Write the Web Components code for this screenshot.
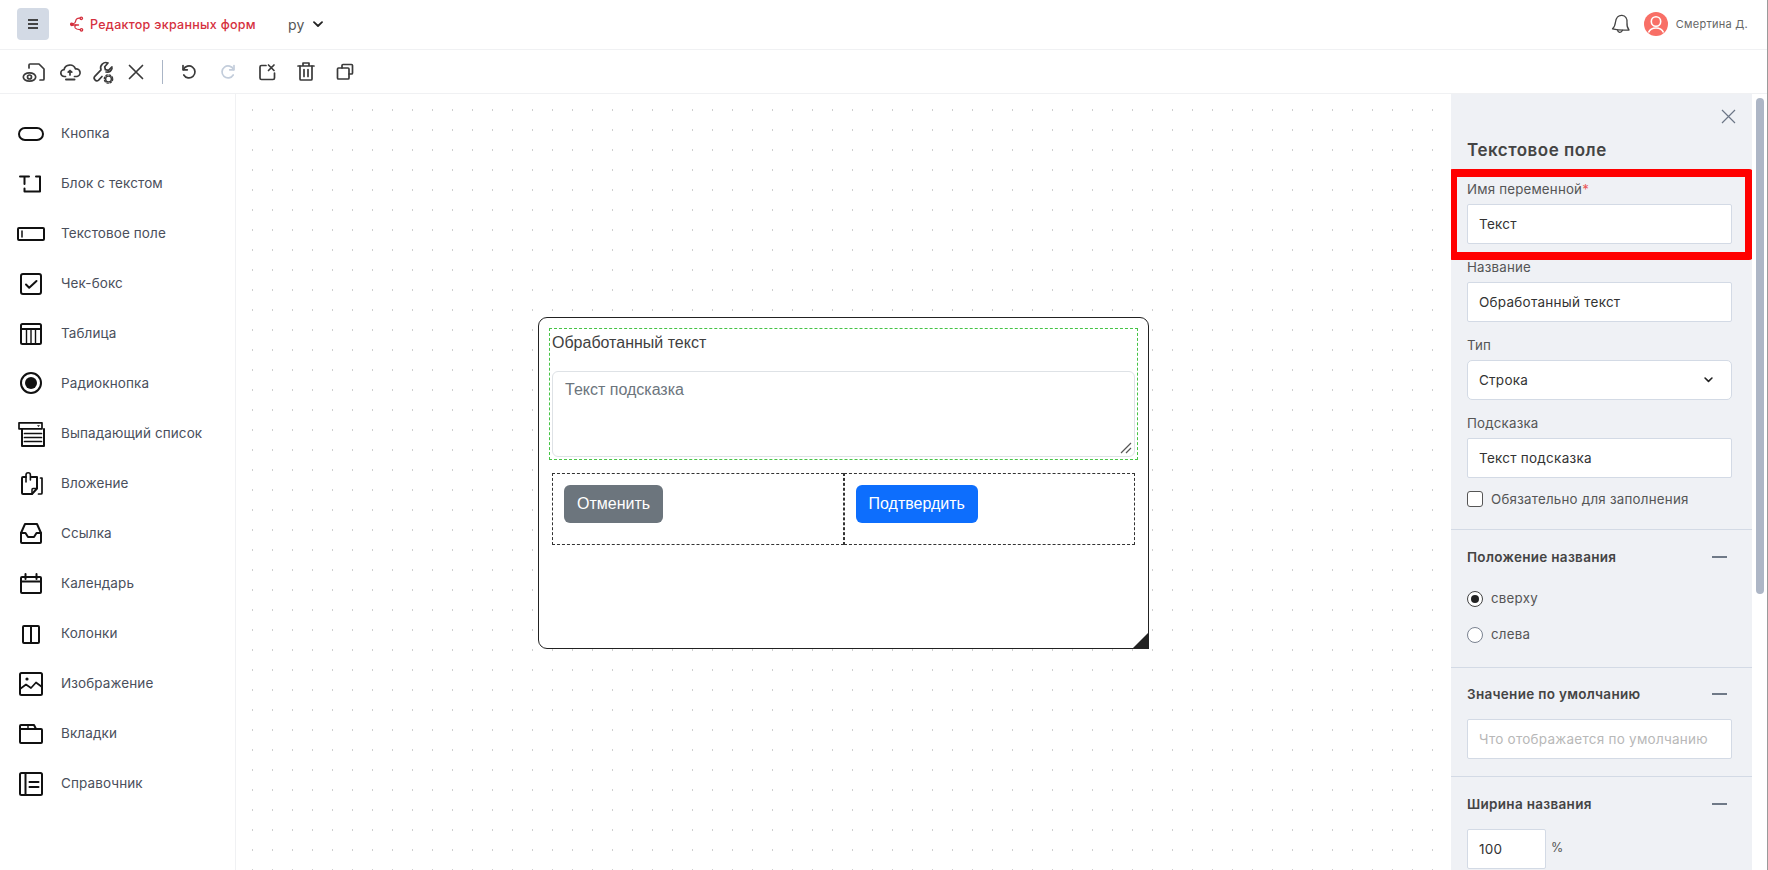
<!DOCTYPE html>
<html lang="ru">
<head>
<meta charset="utf-8">
<title>Редактор экранных форм</title>
<style>
html,body{margin:0;padding:0;height:100%;overflow:hidden;background:#fff}
body{font-family:Inter,"Noto Sans",sans-serif;color:#444}
</style>
</head>
<body>
<app-shell>
  <top-bar slot="top"></top-bar>
  <tool-bar slot="tools"></tool-bar>
  <side-palette slot="left">
    <palette-item icon="button">Кнопка</palette-item>
    <palette-item icon="textblock">Блок с текстом</palette-item>
    <palette-item icon="textfield">Текстовое поле</palette-item>
    <palette-item icon="checkbox">Чек-бокс</palette-item>
    <palette-item icon="table">Таблица</palette-item>
    <palette-item icon="radio">Радиокнопка</palette-item>
    <palette-item icon="dropdown">Выпадающий список</palette-item>
    <palette-item icon="attach">Вложение</palette-item>
    <palette-item icon="inbox">Ссылка</palette-item>
    <palette-item icon="calendar">Календарь</palette-item>
    <palette-item icon="columns">Колонки</palette-item>
    <palette-item icon="image">Изображение</palette-item>
    <palette-item icon="tabs">Вкладки</palette-item>
    <palette-item icon="book">Справочник</palette-item>
  </side-palette>
  <design-canvas slot="center"><form-preview></form-preview></design-canvas>
  <prop-panel slot="right">
    <prop-field label="Имя переменной" required value="Текст"></prop-field>
    <prop-field label="Название" value="Обработанный текст"></prop-field>
    <prop-field label="Тип" value="Строка" select></prop-field>
    <prop-field label="Подсказка" value="Текст подсказка"></prop-field>
    <prop-check>Обязательно для заполнения</prop-check>
    <prop-section title="Положение названия" style="--pt:17px;--pb:24px;--gap:24px">
      <prop-radio checked>сверху</prop-radio>
      <prop-radio style="margin-top:20px">слева</prop-radio>
    </prop-section>
    <prop-section title="Значение по умолчанию" style="--pt:16px;--pb:17px;--gap:15px">
      <prop-input placeholder="Что отображается по умолчанию"></prop-input>
    </prop-section>
    <prop-section title="Ширина названия" style="--pt:17px;--pb:16px;--gap:15px">
      <div style="display:flex;gap:5px;align-items:center"><prop-input value="100" style="width:79px"></prop-input><span style="font-size:12.5px;color:#555;margin-top:-3px">%</span></div>
    </prop-section>
  </prop-panel>
  <panel-scroll slot="scroll"></panel-scroll>
</app-shell>

<script>
const ICONS = {
  button:'<rect x="2" y="9" width="24" height="12" rx="6"/>',
  textblock:'<path d="M3 7.5H12M7.5 7.5V15"/><path d="M19 7.5H23V22.5H7.5V19.5"/>',
  textfield:'<rect x="1" y="9" width="26" height="12" rx="1"/><path d="M5 12v6" stroke-width="1.5"/>',
  checkbox:'<rect x="4" y="5" width="20" height="20" rx="2"/><path d="M9 15.5l3.2 3.2L19.5 12"/>',
  table:'<rect x="4" y="5" width="20" height="20" rx="1.5"/><path d="M4 10H24" /><path d="M9.5 10V25M14 10V25M18.5 10V25" stroke-width="1.4"/>',
  radio:'<circle cx="14" cy="14" r="10"/><circle cx="14" cy="14" r="6" fill="#111" stroke="none"/>',
  dropdown:'<rect x="2" y="3.8" width="23" height="6" stroke-width="1.7"/><path d="M20 6.2h3l-1.500 1.800z" fill="#111" stroke="none"/><path d="M5 10V27H27V10" stroke-width="2"/><path d="M7.500 14.500H24.500M7.500 18.500H24.500M7.500 22.500H24.500" stroke-width="1.700"/>',
  attach:'<path d="M9 8H6a1 1 0 0 0-1 1V24a1 1 0 0 0 1 1H15l5-5.500V8H14.500"/><path d="M15 25v-4.500a1 1 0 0 1 1-1h4" stroke-width="1.500"/><path d="M9 13V6a2.200 2.200 0 0 1 4.400 0V11" stroke-width="1.600"/><path d="M23.500 9H25V24a1 1 0 0 1-1 1h-2.500" stroke-width="1.700"/>',
  inbox:'<path d="M4 14L8 5H20L24 14V23a1 1 0 0 1-1 1H5a1 1 0 0 1-1-1Z"/><path d="M4 14H8.500L11 18H17L19.500 14H24" />',
  calendar:'<rect x="4" y="8" width="20" height="16" rx="1"/><path d="M4 12.500H24" /><path d="M8.500 5V10M19.500 5V10" />',
  columns:'<rect x="6" y="7" width="16" height="17" rx="1"/><path d="M14 7V24"/>',
  image:'<rect x="3" y="4" width="22" height="22" rx="1.500"/><circle cx="10" cy="10" r="1.600" fill="#111" stroke="none"/><path d="M3 20L9 15.500L14 19L19 13.500L25 18" stroke-width="1.700"/>',
  tabs:'<rect x="3" y="10" width="22" height="14" rx="1"/><path d="M3 10V7a1 1 0 0 1 1-1H17L19 10"/><path d="M11 6V10" stroke-width="1.400"/>',
  book:'<rect x="3" y="4" width="22" height="22" rx="1.500"/><path d="M8.500 4V26"/><path d="M12.500 13H21.500M12.500 18H21.500"/>',
  eyefile:'<path d="M9 10V7a1 1 0 0 1 1-1H19l5 5V21a1 1 0 0 1-1 1H20"/><ellipse cx="9.500" cy="19" rx="6.200" ry="4.200"/><circle cx="9.500" cy="19" r="2"/>',
  cloud:'<path d="M11.500 18.500H10.500a3.400 3.400 0 0 1-.5-6.800 A6 6 0 0 1 21.500 11a3.800 3.800 0 0 1 1.500 7.500H20.500"/><path d="M16 17V12.500M14.200 14.200L16 12.500L17.800 14.200"/><path d="M12 21.500H20.500" stroke-width="2"/>',
  wrench:'<path d="M24 9l-3.600 3.300-3-.6-.7-3L20 5a5.300 5.300 0 0 0-7 6.800L6.800 18.300a2.700 2.700 0 0 0 3.800 3.800L14 18.500"/><path d="M24 10.500a5.300 5.300 0 0 1-6 3.500"/><circle cx="20.500" cy="21" r="2.900" stroke-width="1.400"/><circle cx="20.500" cy="21" r="4.200" stroke-dasharray="1.600 1.700" stroke-width="1.300"/>',
  cross:'<path d="M7.500 7.500L20.500 20.500M20.500 7.500L7.500 20.500"/>',
  undo:'<path d="M8.500 11.500A6 6 0 1 1 8.800 17"/><path d="M8 7.500V11.800H12.300"/>',
  redo:'<path d="M19.500 11.500A6 6 0 1 0 19.200 17"/><path d="M20 7.500V11.800H15.700"/>',
  xbox:'<path d="M13 7.500H8.500a1.500 1.500 0 0 0-1.500 1.500V20a1.500 1.500 0 0 0 1.500 1.500H20a1.500 1.500 0 0 0 1.500-1.500V15"/><path d="M15.500 7L21 12.500M21 7L15.500 12.500"/>',
  trash:'<path d="M6 8H22M11 8V5H17V8"/><path d="M8 8V21a1 1 0 0 0 1 1H19a1 1 0 0 0 1-1V8"/><path d="M12 11.500V18.500M16 11.500V18.500"/>',
  copy:'<path d="M11 10V7.500a1 1 0 0 1 1-1H20.500a1 1 0 0 1 1 1V15a1 1 0 0 1-1 1H18"/><rect x="6.500" y="10" width="11.500" height="11" rx="1"/>'
};

function def(name, render){
  customElements.define(name, class extends HTMLElement{
    connectedCallback(){
      if(this.shadowRoot) return;
      this.attachShadow({mode:'open'}).innerHTML = render(this);
    }
  });
}

def('ui-icon', el=>{
  const n = el.getAttribute('name');
  const sw = el.getAttribute('sw')||'2';
  const c = el.getAttribute('color')||'#111';
  return `<style>:host{display:block;width:28px;height:28px;flex:none}svg{display:block}</style>
  <svg width="28" height="28" viewBox="0 0 28 28" fill="none" stroke="${c}" stroke-width="${sw}" stroke-linecap="round" stroke-linejoin="round">${ICONS[n]||''}</svg>`;
});

def('app-shell', ()=>`<style>
:host{display:grid;grid-template-rows:50px 44px 776px;width:1768px;height:870px;box-sizing:border-box;border-right:1px solid #9a9a9a;overflow:hidden}
.main{display:flex;min-height:0;overflow:hidden}
</style>
<slot name="top"></slot><slot name="tools"></slot>
<div class="main"><slot name="left"></slot><slot name="center"></slot><slot name="right"></slot><slot name="scroll"></slot></div>`);

def('top-bar', ()=>`<style>
:host{display:flex;align-items:center;height:50px;box-sizing:border-box;border-bottom:1px solid #f0f1f3;padding:0 19px 1px 17px;background:#fff}
.burger{width:32px;height:32px;border-radius:4px;background:#d3dae5;display:flex;align-items:center;justify-content:center}
.logo{display:flex;align-items:center;margin-left:21px}
.brand{margin-left:6px;font:500 12.500px Inter,sans-serif;letter-spacing:.28px;color:#d5303e;white-space:nowrap}
.lang{margin-left:32px;font:400 14px Inter,sans-serif;color:#555;letter-spacing:.3px}
.lang-ch{margin-left:8px;display:block}
.sp{flex:1}
.bell{display:block}
.av{margin-left:13px;display:block}
.name{margin-left:8px;font:400 11px Inter,sans-serif;letter-spacing:.25px;color:#666;white-space:nowrap}
</style>
<div class="burger"><svg width="12" height="10" viewBox="0 0 12 10" stroke="#444" stroke-width="2"><path d="M1 1H11M1 5H11M1 9H11"/></svg></div>
<div class="logo"><svg width="14" height="16" viewBox="0 0 14 16" fill="none" stroke="#d5303e" stroke-width="1.300" stroke-linecap="round"><circle cx="11.300" cy="2.300" r="1.200"/><path d="M10 2.200C7.500 1.800 5.800 3 5.700 5C5.600 6.500 4.500 7.400 3 8"/><circle cx="1.800" cy="8.300" r="1.200" fill="#d5303e"/><path d="M3 9H8.500"/><path d="M5.800 9C4.700 10 4.600 11 5.200 12C5.900 13 7.500 13.500 10 13.600"/><circle cx="11.500" cy="13.800" r="1.200"/></svg><span class="brand">Редактор экранных форм</span></div>
<span class="lang">ру</span>
<svg class="lang-ch" width="10" height="7" viewBox="0 0 10 7" fill="none" stroke="#222" stroke-width="1.800" stroke-linecap="round" stroke-linejoin="round"><path d="M1 1.200L5 5L9 1.200"/></svg>
<div class="sp"></div>
<svg class="bell" width="20" height="20" viewBox="0 0 20 20" fill="none" stroke="#444" stroke-width="1.300" stroke-linecap="round" stroke-linejoin="round"><path d="M1.500 14.800C3.800 13 4.200 10.500 4.500 8C5 4 7.500 1 11 1.300C14.500 1.700 16.300 4.800 16 8.500C15.800 11 16.300 14 18 16C13 16.300 6 16 1.500 14.800Z"/><path d="M6.500 15.800C6.700 18.800 10.200 19.300 11.500 16.300"/></svg>
<svg class="av" width="24" height="24" viewBox="0 0 24 24"><circle cx="12" cy="12" r="12" fill="#f86f66"/><circle cx="12" cy="9.500" r="4.700" fill="none" stroke="#fff" stroke-width="1.600"/><path d="M4.500 20.500C6 17 9 16 12 16C15 16 18 17 19.500 20.500" fill="none" stroke="#fff" stroke-width="1.600"/></svg>
<span class="name">Смертина Д.</span>`);

def('tool-bar', ()=>{
  const i=(n,o='')=>`<ui-icon name="${n}" sw="1.700" color="${o||'#3a3a3a'}"></ui-icon>`;
  return `<style>
:host{display:flex;align-items:center;height:44px;box-sizing:border-box;border-bottom:1px solid #f0f1f3;padding-left:20px;background:#fff}
.g{display:flex;align-items:center}
.a{gap:6px}.b{gap:11px}
.sep{width:1px;height:24px;background:#aab5c6;margin:0 12px 0 12px}
</style>
<div class="g a">${i('eyefile')}${i('cloud')}${i('wrench')}${i('cross')}</div>
<div class="sep"></div>
<div class="g b">${i('undo')}${i('redo','#c3cddb')}${i('xbox')}${i('trash')}${i('copy')}</div>`;
});

def('side-palette', ()=>`<style>
:host{display:flex;flex-direction:column;width:236px;flex:none;box-sizing:border-box;border-right:1px solid #f0f1f3;padding-top:14px;background:#fff}
</style><slot></slot>`);

def('palette-item', el=>`<style>
:host{display:flex;align-items:center;height:50px;padding-left:17px;gap:16px;font:400 13.500px Inter,sans-serif;letter-spacing:.1px;color:#4a4f5c}
</style><ui-icon name="${el.getAttribute('icon')}"></ui-icon><span><slot></slot></span>`);

def('design-canvas', ()=>`<style>
:host{display:block;position:relative;flex:1;min-width:0;background:#fff;overflow:hidden}
svg.dots{position:absolute;inset:0;width:100%;height:100%}
</style>
<svg class="dots"><defs><pattern id="d" x="16" y="15" width="20" height="20" patternUnits="userSpaceOnUse"><rect width="1" height="2" fill="#cfcfcf"/></pattern></defs><rect width="100%" height="100%" fill="url(#d)"/></svg>
<slot></slot>`);

def('form-preview', ()=>`<style>
:host{position:absolute;left:302px;top:223px;width:611px;height:332px;box-sizing:border-box;border:1px solid #222;border-radius:9px;background:#fff;padding:10px;font:16px "Liberation Sans",Arial,sans-serif;color:#3f3f3f}
.field{border:1px dashed #45c445;height:132px;box-sizing:border-box;padding:2px}
.title{line-height:24px;height:40px}
.ta{position:relative;height:86px;box-sizing:border-box;border:1px solid #dee2e6;border-radius:6px;padding:6px 12px;line-height:24px;color:#6c757d}
.ta svg{position:absolute;right:2px;bottom:2px}
.cols{display:flex;margin:13px 0 0 3px;width:583px}
.col{flex:1;height:72px;box-sizing:border-box;border:1px dashed #333;padding:11px}
.btn{display:inline-block;height:38px;box-sizing:border-box;padding:0 13px;line-height:38px;border-radius:6px;color:#fff}
.gr{background:#6c757d}.bl{background:#0d6efd}
.tri{position:absolute;right:-1px;bottom:-1px;width:0;height:0;border-style:solid;border-width:0 0 17px 17px;border-color:transparent transparent #222 transparent}
</style>
<div class="field"><div class="title">Обработанный текст</div>
<div class="ta">Текст подсказка<svg width="12" height="12" viewBox="0 0 12 12" stroke="#555" stroke-width="1.200" fill="none"><path d="M1 11L11 1M6 11L11 6"/></svg></div></div>
<div class="cols"><div class="col"><span class="btn gr">Отменить</span></div><div class="col"><span class="btn bl">Подтвердить</span></div></div>
<div class="tri"></div>`);

def('prop-panel', ()=>`<style>
:host{display:block;position:relative;width:301px;flex:none;box-sizing:border-box;background:#eff1f5;overflow:hidden;font-family:Inter,sans-serif}
.in{padding:0 20px 0 16px}
.close{display:flex;justify-content:flex-end;padding-top:15px;height:15px;margin-right:-4px;box-sizing:content-box}
.close svg{display:block}
h2{margin:16px 0 19px;font:600 17px/20px Inter,sans-serif;letter-spacing:.5px;color:#444}
.mark{position:absolute;left:-2px;top:75px;width:304px;height:91px;box-sizing:border-box;border:8px solid #f00;border-radius:4px}
</style>
<div class="in"><div class="close"><svg width="15" height="15" viewBox="0 0 15 15" stroke="#6c7686" stroke-width="1.200" fill="none"><path d="M1 1L14 14M14 1L1 14"/></svg></div>
<h2>Текстовое поле</h2><slot></slot></div>
<div class="mark"></div>`);

def('prop-field', el=>{
  const req = el.hasAttribute('required') ? '<i>*</i>' : '';
  const sel = el.hasAttribute('select');
  return `<style>
:host{display:block;margin-bottom:13px}
.l{font:400 13.300px/20px Inter,sans-serif;letter-spacing:.2px;color:#555;margin-bottom:5px;height:20px}
i{font-style:normal;color:#ea5a5a}
</style><div class="l">${el.getAttribute('label')}${req}</div>
<prop-input value="${el.getAttribute('value')}" ${sel?'select':''}></prop-input>`;
});

def('prop-input', el=>{
  const v = el.getAttribute('value');
  const ph = el.getAttribute('placeholder');
  const sel = el.hasAttribute('select');
  return `<style>
:host{display:block}
.b{height:40px;box-sizing:border-box;border:1px solid #d3dae5;border-radius:${sel?5:2}px;background:#fff;padding:0 11px;display:flex;align-items:center;justify-content:space-between;font:400 13.500px Inter,sans-serif;letter-spacing:.25px;color:#333;white-space:nowrap;overflow:hidden}
.ph{color:#b8b8b8}
svg{margin-right:7px}
</style><div class="b"><span class="${ph?'ph':''}">${ph||v}</span>${sel?'<svg width="9" height="6" viewBox="0 0 10 7" fill="none" stroke="#222" stroke-width="1.900" stroke-linecap="round" stroke-linejoin="round"><path d="M1 1.200L5 5L9 1.200"/></svg>':''}</div>`;
});

def('prop-check', ()=>`<style>
:host{display:flex;align-items:center;gap:8px;height:16px;margin-top:1px;padding-bottom:22px;font:400 13.300px/16px Inter,sans-serif;letter-spacing:.25px;color:#555}
.c{width:16px;height:16px;box-sizing:border-box;border:1px solid #555;border-radius:3px;background:#fff;flex:none}
</style><div class="c"></div><span><slot></slot></span>`);

def('prop-section', el=>`<style>
:host{display:block;margin:0 -20px 0 -16px;padding:var(--pt) 20px var(--pb) 16px;border-top:1px solid #d3dae5}
.h{display:flex;align-items:center;justify-content:space-between;height:20px;margin-bottom:var(--gap);font:600 13.500px/20px Inter,sans-serif;letter-spacing:.3px;color:#444}
.m{width:15px;height:1.500px;background:#6f7987;margin-right:5px}
</style><div class="h"><span>${el.getAttribute('title')}</span><div class="m"></div></div><slot></slot>`);

def('prop-radio', el=>`<style>
:host{display:flex;align-items:center;gap:8px;height:16px;font:400 13.300px/16px Inter,sans-serif;letter-spacing:.25px;color:#555}
svg{display:block;flex:none}
span{margin-top:-2px}
</style><svg width="16" height="16" viewBox="0 0 16 16"><circle cx="8" cy="8" r="7.500" fill="#fff" stroke="${el.hasAttribute('checked')?'#444':'#7a8290'}" stroke-width="1"/>${el.hasAttribute('checked')?'<circle cx="8" cy="8" r="4" fill="#222"/>':''}</svg><span><slot></slot></span>`);

def('panel-scroll', ()=>`<style>
:host{display:block;width:15px;flex:none;background:#fff;padding:4px 3px 0 4px;box-sizing:border-box}
.t{width:8px;height:496px;border-radius:4px;background:#adb6c6}
</style><div class="t"></div>`);
</script>
</body>
</html>
